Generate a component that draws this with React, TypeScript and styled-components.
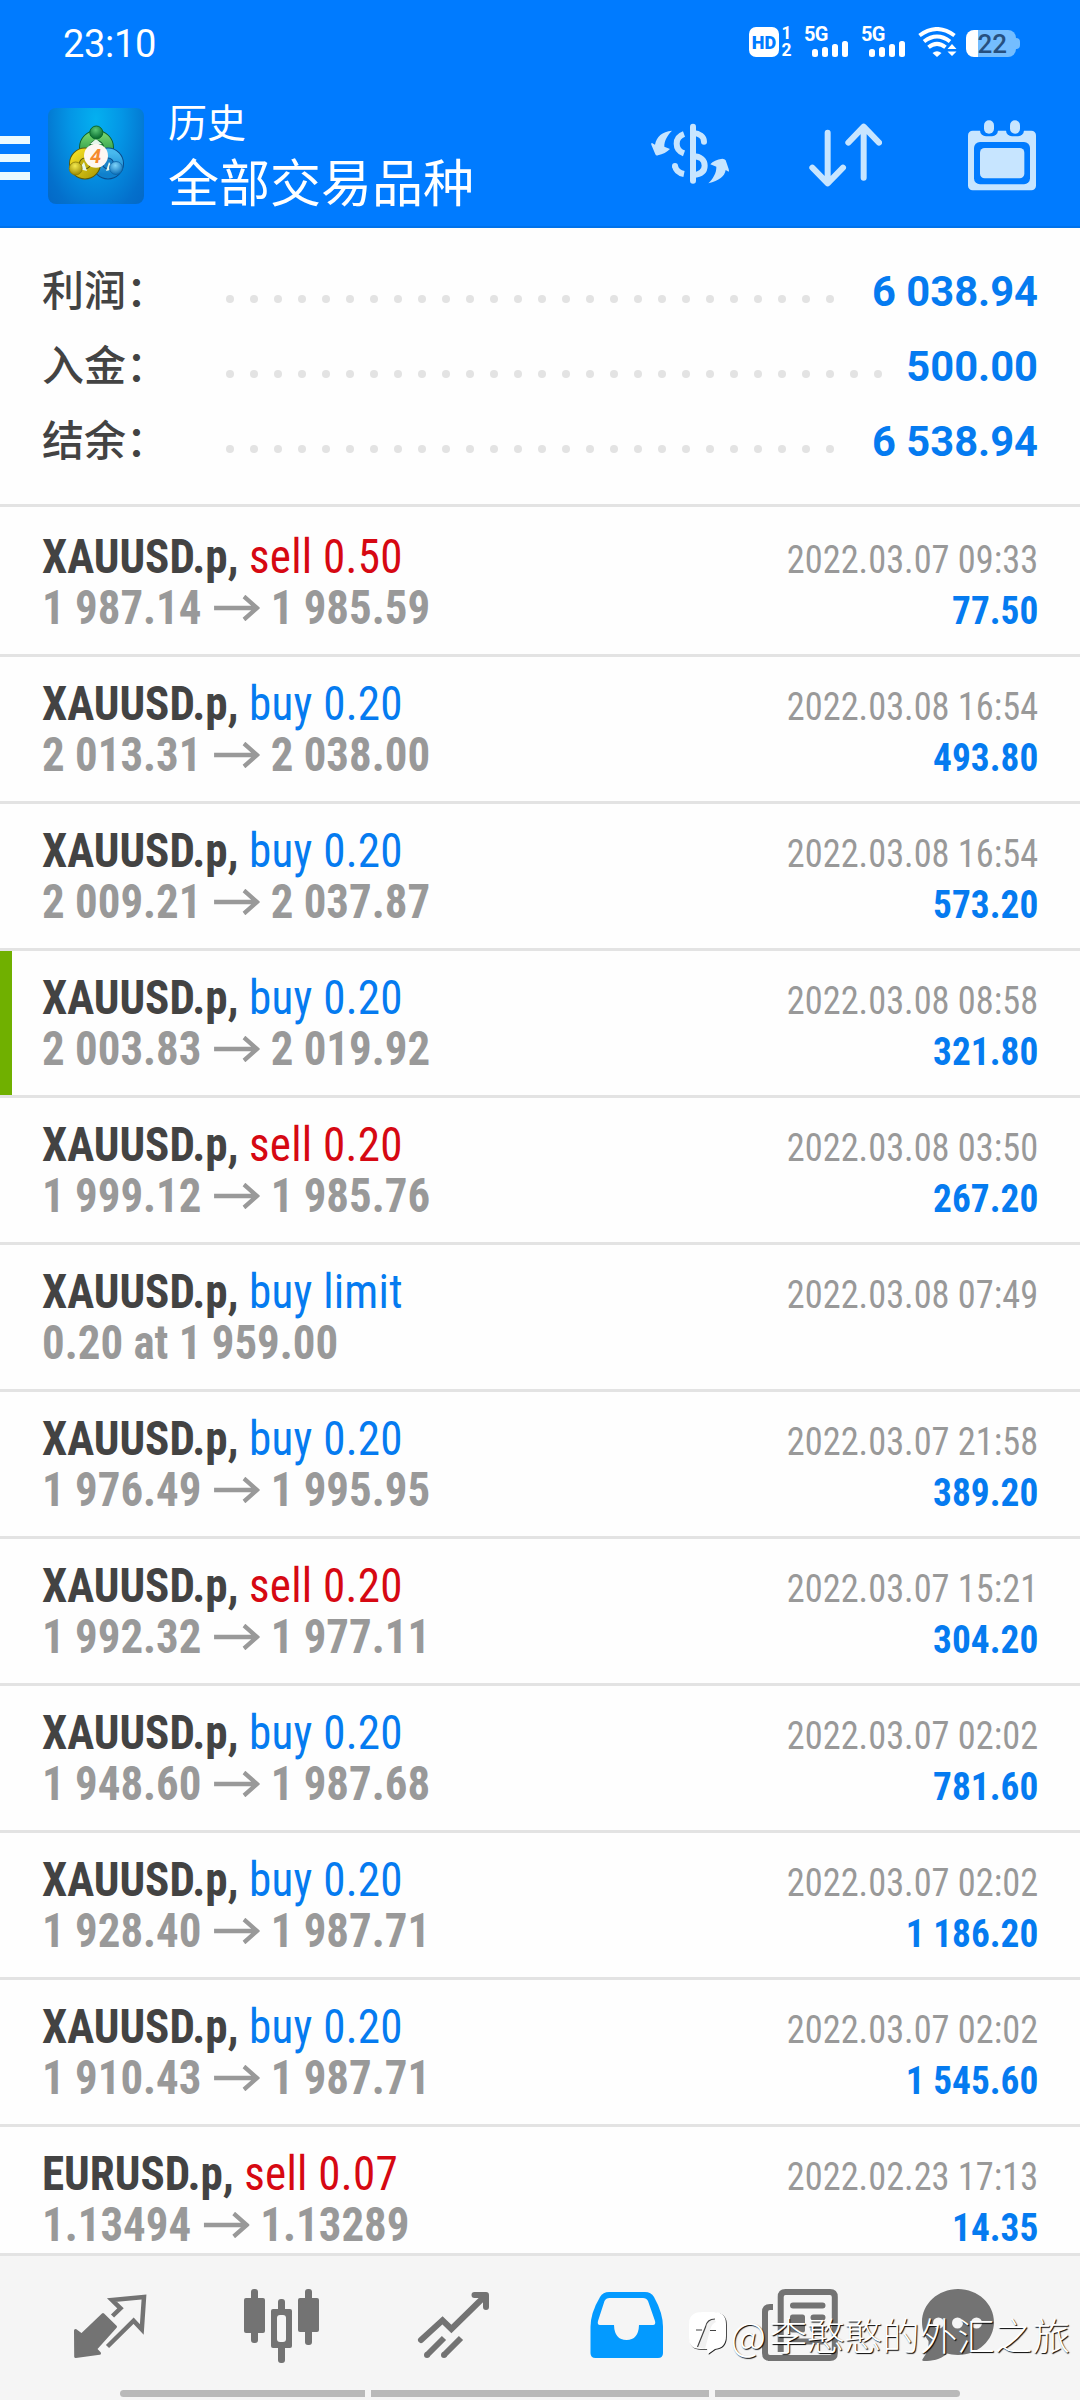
import React from "react";
import styled, { createGlobalStyle } from "styled-components";

const GlobalStyle = createGlobalStyle`
  * { box-sizing: border-box; }
  body {
    margin: 0;
    background: #fefefe;
    font-family: Roboto, "Noto Sans CJK SC", sans-serif;
  }
  svg { display: block; flex: none; }
`;

const Screen = styled.div`
  position: relative;
  width: 1080px;
  height: 2400px;
  display: flex;
  flex-direction: column;
  overflow: hidden;
  background: #fefefe;
`;

const Header = styled.header`
  flex: none;
  height: 228px;
  display: flex;
  flex-direction: column;
  background: #007bff;
  color: #fff;
  border-bottom: 2px solid #0072ea;
`;

const StatusBar = styled.div`
  height: 88px;
  padding: 0 60px 0 63px;
  display: flex;
  align-items: center;
  justify-content: space-between;
`;

const Clock = styled.span`
  font-size: 38px;
  line-height: 44px;
  letter-spacing: -0.3px;
`;

const StatusIcons = styled.div`
  display: flex;
  align-items: center;
  height: 30px;
  margin-top: -4px;
`;

const HdBadge = styled.span`
  width: 30px;
  height: 30px;
  border-radius: 7px;
  background: #fff;
  color: #007bff;
  font: 900 18px/31px Roboto, sans-serif;
  text-align: center;
`;

const SimNumbers = styled.span`
  width: 11px;
  margin: 0 12px 0 2px;
  display: flex;
  flex-direction: column;
  align-items: center;
  font: 700 17.5px/17px Roboto, sans-serif;
`;

const Signal = styled.span`
  width: 44px;
  height: 30px;
  margin-right: 13px;
  display: flex;
  flex-direction: column;
`;

const SignalLabel = styled.span`
  height: 14px;
  font: 700 20px/15px Roboto, sans-serif;
  letter-spacing: -0.6px;
`;

const SignalBars = styled.span`
  height: 16px;
  display: flex;
  align-items: flex-end;
  justify-content: flex-end;
  gap: 4px;
`;

const SignalBar = styled.i<{ $h: number }>`
  width: 6px;
  height: ${(p) => p.$h}px;
  border-radius: 2.5px;
  background: #fff;
`;

const Battery = styled.span`
  width: 50px;
  height: 27px;
  margin: 3px 0 0 8px;
  border-radius: 8px;
  background: linear-gradient(90deg, #fff 12px, #74bdff 12px);
  color: #27507f;
  font: 500 26px/28px Roboto, sans-serif;
  text-align: right;
  padding-right: 9px;
`;

const BatteryTip = styled.i`
  width: 4px;
  height: 11px;
  margin-top: 3px;
  border-radius: 0 4px 4px 0;
  background: #74bdff;
`;

const Toolbar = styled.div`
  flex: 1;
  padding: 0 36px 0 0;
  display: flex;
  align-items: flex-start;
`;

const MenuButton = styled.div`
  width: 30px;
  margin: 48px 18px 0 0;
  display: flex;
  flex-direction: column;
  gap: 10px;
`;

const MenuLine = styled.i`
  height: 8px;
  background: #eafaff;
`;

const AppLogo = styled.div`
  width: 96px;
  height: 96px;
  margin-top: 20px;
  border-radius: 8px;
  overflow: hidden;
  background: radial-gradient(ellipse at 50% 12%, #04b0f0 0%, #0496e6 38%, #0470cc 82%, #0468c6 100%);
`;

const Titles = styled.div`
  margin: 10px 0 0 24px;
  flex: 1;
  display: flex;
  flex-direction: column;
  font-family: "Noto Sans CJK SC", sans-serif;
`;

const Subtitle = styled.span`
  font-size: 39px;
  line-height: 44px;
`;

const Title = styled.span`
  margin-top: 8px;
  font-size: 51px;
  line-height: 60px;
`;

const Tools = styled.div`
  display: flex;
  align-items: flex-start;
  padding-top: 32px;
`;

const ToolSlot = styled.div<{ $top: number; $gap: number }>`
  margin: ${(p) => p.$top}px ${(p) => p.$gap}px 0 0;
`;

const SummaryPanel = styled.section`
  flex: none;
  height: 279px;
  padding: 24px 42px 0;
  border-bottom: 3px solid #e3e3e3;
`;

const SummaryRow = styled.div`
  height: 75px;
  display: flex;
  align-items: center;
`;

const SummaryLabel = styled.span`
  width: 176px;
  color: #434343;
  font: 500 42px/60px "Noto Sans CJK SC", sans-serif;
  margin-top: -3px;
`;

const Leader = styled.span`
  flex: 1;
  height: 8px;
  margin: 18px 12px 0 0;
  display: flex;
  flex-wrap: wrap;
  overflow: hidden;
`;

const LeaderDot = styled.i`
  width: 8px;
  height: 8px;
  margin: 0 8px;
  border-radius: 50%;
  background: #e3e3e3;
`;

const SummaryValue = styled.span`
  color: #057bf0;
  font-weight: 700;
  font-size: 41.7px;
  line-height: 50px;
  margin-top: 4px;
`;

const DealList = styled.main`
  flex: 1;
  min-height: 0;
  overflow: hidden;
  padding-top: 3px;
`;

const DealRow = styled.article<{ $marked?: boolean }>`
  height: 147px;
  padding: 21px 42px 0;
  border-bottom: 3px solid #e3e3e3;
  background-image: ${(p) => (p.$marked ? "linear-gradient(#70b000, #70b000)" : "none")};
  background-size: 12px 100%;
  background-repeat: no-repeat;
`;

const DealLine = styled.div`
  height: 51px;
  display: flex;
  align-items: baseline;
  justify-content: space-between;
  white-space: pre;
  font-family: "Roboto Condensed", Roboto, sans-serif;
  line-height: 51px;
`;

const Narrow = styled.span<{ $side: "left" | "right"; $scale: number }>`
  display: inline-flex;
  align-items: baseline;
  transform: scaleX(${(p) => p.$scale});
  transform-origin: ${(p) => p.$side} center;
`;

const Symbol = styled.b`
  color: #434343;
  font-size: 48px;
`;

const Action = styled.span<{ $sell: boolean }>`
  color: ${(p) => (p.$sell ? "#d60812" : "#057bf0")};
  font-size: 48px;
  font-weight: 450;
  letter-spacing: 0.3px;
`;

const Price = styled.b`
  color: #999;
  font-size: 48px;
`;

const PriceArrow = styled.svg`
  width: 49px;
  height: 26px;
  margin: 0 12px 0 13px;
  align-self: center;
`;

const DateText = styled.span`
  color: #999;
  font-size: 39.5px;
`;

const Profit = styled.b`
  color: #057bf0;
  font-size: 39.5px;
`;

const NavBar = styled.nav`
  flex: none;
  height: 147px;
  border-top: 3px solid #e3e3e3;
  background: #f5f5f5;
  display: flex;
  flex-direction: column;
`;

const NavItems = styled.div`
  height: 134px;
  padding: 22px 24px 0;
  display: grid;
  grid-template-columns: repeat(6, 172px);
  justify-items: center;
  color: #737373;
`;

const HomeIndicator = styled.div`
  width: 840px;
  height: 7px;
  margin-left: 120px;
  display: grid;
  grid-template-columns: 245px 1fr 245px;
  gap: 6px;
  border-radius: 4px;
  overflow: hidden;
`;

const HomeSegment = styled.i`
  background: #b9b9b9;
`;

const Watermark = styled.div`
  position: absolute;
  right: 10px;
  top: 2304px;
  height: 60px;
  display: flex;
  align-items: center;
  color: #fff;
  font: 300 37.6px/60px "Noto Sans CJK SC", sans-serif;
  text-shadow: 1px 1px 1px #000;
  white-space: nowrap;
`;

const AtSign = styled.span`
  width: 39px;
  font-size: 39px;
`;

const tint = "#c7e5ff";

const SwapCurrencyIcon = () => (
  <svg width="80" height="62" viewBox="30 340 240 186" fill={tint}>
    <rect x="150" y="342" width="18" height="180" rx="9" />
    <g fill="none" stroke={tint} strokeWidth="18">
      <path d="M160 370C178 371 192 381 192 396" strokeLinecap="round" />
      <path d="M160 440C182 440 194 452 194 468C194 484 182 494 160 496" />
      <path d="M132 373C118 378 110 388 110 402C110 416 118 426 132 431" />
      <path d="M105 469C107 481 117 490 132 493" />
    </g>
    <circle cx="105" cy="469" r="9" />
    <path d="M96 363C66 366 50 380 45 405L36 400Q32 400 34 405L46 434Q48 439 54 437Q76 432 90 418L73 411C72 392 84 375 96 363Z" />
    <path d="M205 521C238 513 254 500 257 481L266 486Q268 484 266 478L257 452Q254 447 247 447Q222 450 211 464L229 471C230 490 218 508 205 521Z" />
  </svg>
);

const SortIcon = () => (
  <svg width="73" height="64" viewBox="508 340 219 192" fill="none" stroke={tint} strokeWidth="18" strokeLinecap="round" strokeLinejoin="round">
    <path d="M564 369V519M518 474L564 521L610 474" />
    <path d="M672 504V353M626 399L672 351L718 399" />
  </svg>
);

const CalendarIcon = () => (
  <svg width="68" height="71" viewBox="984 329 204 213">
    <rect x="984" y="361" width="204" height="179" rx="14" fill={tint} />
    <rect x="1002" y="395" width="168" height="127" rx="18" fill="#007bff" />
    <rect x="1020" y="413" width="133" height="91" rx="14" fill={tint} />
    <rect x="1020" y="318" width="54" height="60" rx="18" fill="#007bff" />
    <rect x="1098" y="318" width="54" height="60" rx="18" fill="#007bff" />
    <rect x="1032" y="330" width="30" height="40" rx="15" fill={tint} />
    <rect x="1110" y="330" width="30" height="40" rx="15" fill={tint} />
  </svg>
);

const WifiIcon = () => (
  <svg width="40" height="30" viewBox="0 0 40 30" fill="none" stroke="#fff" strokeWidth="4">
    <path d="M1.500 8.500Q19 -4.500 36.500 8.500" />
    <path d="M6 14.500Q19 4.500 32 14.500" />
    <path d="M10.500 20.300Q19 13.500 27.500 20.300" />
    <path d="M14.500 26Q19 22.500 23.500 26L19 30Z" fill="#fff" stroke="none" />
    <path d="M34 17L38.500 22H29.500ZM34 29L29.500 24.500H38.500Z" fill="#fff" stroke="none" />
  </svg>
);

const LogoIcon = () => (
  <svg width="96" height="96" viewBox="48 108 96 96">
    <defs>
      <linearGradient id="green" x1="0" y1="0" x2="0" y2="1">
        <stop offset="0" stopColor="#6fd06c" />
        <stop offset="1" stopColor="#12863a" />
      </linearGradient>
      <linearGradient id="yellow" x1="0" y1="0" x2="1" y2="1">
        <stop offset="0" stopColor="#f2dc22" />
        <stop offset="1" stopColor="#b3a208" />
      </linearGradient>
      <linearGradient id="blue" x1="0" y1="0" x2="0" y2="1">
        <stop offset="0" stopColor="#48b9ee" />
        <stop offset="1" stopColor="#0f80cc" />
      </linearGradient>
      <radialGradient id="greenBall" cx="0.45" cy="0.3" r="0.7">
        <stop offset="0" stopColor="#5cc878" />
        <stop offset="1" stopColor="#04672a" />
      </radialGradient>
      <radialGradient id="yellowBall" cx="0.45" cy="0.3" r="0.7">
        <stop offset="0" stopColor="#f4ea50" />
        <stop offset="1" stopColor="#9c8a00" />
      </radialGradient>
      <radialGradient id="blueBall" cx="0.45" cy="0.3" r="0.7">
        <stop offset="0" stopColor="#7ed4fa" />
        <stop offset="1" stopColor="#0c6fb8" />
      </radialGradient>
    </defs>
    <circle cx="96.500" cy="147.500" r="12" fill="#2f9a48" stroke="#11602a" strokeWidth="11" />
    <circle cx="96.500" cy="147.500" r="12" fill="none" stroke="url(#green)" strokeWidth="9" />
    <circle cx="108" cy="163.500" r="10.500" fill="#1b84c8" stroke="#0a4c8c" strokeWidth="11" />
    <circle cx="108" cy="163.500" r="10.500" fill="none" stroke="url(#blue)" strokeWidth="9" />
    <circle cx="85" cy="163.500" r="10.500" fill="#c0b010" stroke="#5c5a08" strokeWidth="11" />
    <circle cx="85" cy="163.500" r="10.500" fill="none" stroke="url(#yellow)" strokeWidth="9" />
    <path d="M79 169L84 162L87 171ZM114 169L109 162L106 171ZM90 144H102L96 139Z" fill="#e4f6ea" />
    <circle cx="96.300" cy="132.500" r="6.500" fill="url(#greenBall)" stroke="#0b6a2c" />
    <circle cx="75.700" cy="168.500" r="6.500" fill="url(#yellowBall)" stroke="#8a7c08" strokeWidth="0.800" />
    <circle cx="116" cy="168" r="6.500" fill="url(#blueBall)" stroke="#0b63a6" strokeWidth="0.800" />
    <circle cx="96" cy="155.700" r="12" fill="#fdf7f2" />
    <text x="95.500" y="163" fill="#f58a2c" fontSize="20" fontWeight="700" fontStyle="italic" fontFamily="Roboto, sans-serif" textAnchor="middle">4</text>
  </svg>
);

const QuotesIcon = () => (
  <svg width="96" height="96" viewBox="62 2278 96 96">
    <path d="M75.500 2330.500L81.500 2335L103 2314.500L115.500 2326.700L95.500 2349L99.500 2353.300L75.700 2356.500Z" fill="currentColor" stroke="currentColor" strokeWidth="3" strokeLinejoin="round" />
    <path d="M112.500 2316L120.500 2308.300L112 2300L144 2297L141.800 2329.500L133.600 2320.700L107.500 2346.500" fill="none" stroke="currentColor" strokeWidth="4.500" />
  </svg>
);

const CandlesIcon = () => (
  <svg width="96" height="96" viewBox="234 2278 96 96" fill="currentColor">
    <rect x="244" y="2298" width="21" height="35" rx="2" />
    <rect x="251" y="2289" width="7" height="54" rx="3" />
    <rect x="298" y="2298" width="21" height="34" rx="2" />
    <rect x="305" y="2289" width="7" height="56" rx="3" />
    <rect x="278" y="2299" width="7" height="64" rx="3" />
    <rect x="271" y="2309" width="21" height="39" rx="2" />
    <rect x="277" y="2315" width="9" height="27" rx="3" fill="#f5f5f5" />
  </svg>
);

const TrendIcon = () => (
  <svg width="96" height="96" viewBox="406 2278 96 96" fill="none" stroke="currentColor" strokeWidth="6">
    <path d="M421 2340L442.500 2320.300L451.400 2329L484 2297" strokeLinecap="round" />
    <path d="M474.500 2295H486V2307" strokeLinecap="round" strokeLinejoin="round" />
    <path d="M427 2355L444 2338M444 2355L461 2338" />
    <g fill="currentColor" stroke="none">
      <circle cx="427" cy="2355" r="3" />
      <circle cx="444" cy="2355" r="3" />
    </g>
  </svg>
);

const TradeIcon = () => (
  <svg width="96" height="96" viewBox="578 2278 96 96">
    <path d="M609 2292H645Q651 2292 654 2297Q663 2313 663 2327V2353Q663 2358 658 2358H595.500Q590.500 2358 590.500 2353V2327Q590.500 2313 600 2297Q603 2292 609 2292Z" fill="#039aff" />
    <path d="M609.500 2298H643Q646.500 2298 648 2301L655 2321Q656 2325 653 2325H639Q638.500 2340 626.500 2340Q614.500 2340 614 2325H600Q597 2325 598 2321L604.500 2301Q606 2298 609.500 2298Z" fill="#f5f5f5" />
  </svg>
);

const NewsIcon = () => (
  <svg width="96" height="96" viewBox="750 2278 96 96">
    <path d="M773 2307H770Q765 2307 765 2312V2353Q765 2358 770 2358H780" fill="none" stroke="currentColor" strokeWidth="6" />
    <path d="M768 2358H830Q834.800 2358 834.800 2353V2297Q834.800 2292 830 2292H785.500Q780.700 2292 780.700 2297V2352" fill="none" stroke="currentColor" strokeWidth="6" />
    <path d="M793 2305.500H822.500M813.500 2317.500H822.500M813.500 2329.500H822.500M793 2341.500H822.500" stroke="currentColor" strokeWidth="6" strokeLinecap="round" />
    <rect x="790" y="2314.500" width="15" height="18" rx="2.500" fill="currentColor" />
  </svg>
);

const ChatIcon = () => (
  <svg width="96" height="96" viewBox="922 2278 96 96">
    <path d="M958 2289C978 2289 994 2304 994 2322C994 2340 978 2355 958 2355C953 2355 950 2354 947 2353.500C940 2360 932 2361 924 2361Q921 2361 923 2358.500C927 2353 929 2348 928.500 2341C924 2335 922 2329 922 2322C922 2304 938 2289 958 2289Z" fill="currentColor" />
    <g fill="#f5f5f5">
      <circle cx="938.500" cy="2323" r="5.500" />
      <circle cx="957.500" cy="2323" r="5.500" />
      <circle cx="976.500" cy="2323" r="5.500" />
    </g>
  </svg>
);

const WatermarkIcon = () => (
  <svg width="42" height="46" viewBox="0 0 42 46">
    <path d="M14 1H26Q38 1 38 13V25Q38 37 27 38L20 43L19 38H12Q1 38 1 27V13Q1 1 14 1Z" fill="#222" transform="translate(0.800 0.800)" />
    <path d="M14 1H26Q38 1 38 13V25Q38 37 27 38L20 43L19 38H12Q1 38 1 27V13Q1 1 14 1Z" fill="#fff" />
    <path d="M26 8Q20 8 18 16L10 36L17 38L22 19Q24 12 28 11Z" fill="#f1f1f1" />
    <path d="M27 8Q19 8 17.500 16L9.500 36M8 19H14M22 19.500H28" fill="none" stroke="#444" strokeWidth="1.200" />
  </svg>
);

const summary = [
  ["利润：", "6 038.94"],
  ["入金：", "500.00"],
  ["结余：", "6 538.94"],
];

type Deal = {
  symbol?: string;
  action: string;
  from: string;
  to?: string;
  date: string;
  profit?: string;
  marked?: boolean;
};

const deals: Deal[] = [
  { action: "sell 0.50", from: "1 987.14", to: "1 985.59", date: "2022.03.07 09:33", profit: "77.50" },
  { action: "buy 0.20", from: "2 013.31", to: "2 038.00", date: "2022.03.08 16:54", profit: "493.80" },
  { action: "buy 0.20", from: "2 009.21", to: "2 037.87", date: "2022.03.08 16:54", profit: "573.20" },
  { action: "buy 0.20", from: "2 003.83", to: "2 019.92", date: "2022.03.08 08:58", profit: "321.80", marked: true },
  { action: "sell 0.20", from: "1 999.12", to: "1 985.76", date: "2022.03.08 03:50", profit: "267.20" },
  { action: "buy limit", from: "0.20 at 1 959.00", date: "2022.03.08 07:49" },
  { action: "buy 0.20", from: "1 976.49", to: "1 995.95", date: "2022.03.07 21:58", profit: "389.20" },
  { action: "sell 0.20", from: "1 992.32", to: "1 977.11", date: "2022.03.07 15:21", profit: "304.20" },
  { action: "buy 0.20", from: "1 948.60", to: "1 987.68", date: "2022.03.07 02:02", profit: "781.60" },
  { action: "buy 0.20", from: "1 928.40", to: "1 987.71", date: "2022.03.07 02:02", profit: "1 186.20" },
  { action: "buy 0.20", from: "1 910.43", to: "1 987.71", date: "2022.03.07 02:02", profit: "1 545.60" },
  { symbol: "EURUSD.p", action: "sell 0.07", from: "1.13494", to: "1.13289", date: "2022.02.23 17:13", profit: "14.35" },
];

const SignalIndicator = () => (
  <Signal>
    <SignalLabel>5G</SignalLabel>
    <SignalBars>
      {[8, 10, 13, 16].map((h) => (
        <SignalBar key={h} $h={h} />
      ))}
    </SignalBars>
  </Signal>
);

export default function App() {
  return (
    <Screen>
      <GlobalStyle />
      <Header>
        <StatusBar>
          <Clock>23:10</Clock>
          <StatusIcons>
            <HdBadge>HD</HdBadge>
            <SimNumbers>
              <span>1</span>
              <span>2</span>
            </SimNumbers>
            <SignalIndicator />
            <SignalIndicator />
            <WifiIcon />
            <Battery>22</Battery>
            <BatteryTip />
          </StatusIcons>
        </StatusBar>
        <Toolbar>
          <MenuButton>
            <MenuLine />
            <MenuLine />
            <MenuLine />
          </MenuButton>
          <AppLogo>
            <LogoIcon />
          </AppLogo>
          <Titles>
            <Subtitle>历史</Subtitle>
            <Title>全部交易品种</Title>
          </Titles>
          <Tools>
            <ToolSlot $top={3} $gap={79}>
              <SwapCurrencyIcon />
            </ToolSlot>
            <ToolSlot $top={3} $gap={86}>
              <SortIcon />
            </ToolSlot>
            <ToolSlot $top={0} $gap={8}>
              <CalendarIcon />
            </ToolSlot>
          </Tools>
        </Toolbar>
      </Header>
      <SummaryPanel>
        {summary.map(([label, value]) => (
          <SummaryRow key={label}>
            <SummaryLabel>{label}</SummaryLabel>
            <Leader>
              {Array.from({ length: 32 }, (_, i) => (
                <LeaderDot key={i} />
              ))}
            </Leader>
            <SummaryValue>{value}</SummaryValue>
          </SummaryRow>
        ))}
      </SummaryPanel>
      <DealList>
        {deals.map((d, i) => (
          <DealRow key={i} $marked={d.marked}>
            <DealLine>
              <Narrow $side="left" $scale={0.938}>
                <Symbol>{d.symbol ?? "XAUUSD.p"}, </Symbol>
                <Action $sell={d.action.startsWith("sell")}>{d.action}</Action>
              </Narrow>
              <Narrow $side="right" $scale={0.92}>
                <DateText>{d.date}</DateText>
              </Narrow>
            </DealLine>
            <DealLine>
              <Narrow $side="left" $scale={0.935}>
                <Price>{d.from}</Price>
                {d.to && (
                  <>
                    <PriceArrow viewBox="0 0 49 26" fill="none" stroke="#999" strokeWidth="4.5">
                      <path d="M0 13H46M32 1.500L46 13L32 24.500" />
                    </PriceArrow>
                    <Price>{d.to}</Price>
                  </>
                )}
              </Narrow>
              <Narrow $side="right" $scale={0.945}>
                <Profit>{d.profit}</Profit>
              </Narrow>
            </DealLine>
          </DealRow>
        ))}
      </DealList>
      <NavBar>
        <NavItems>
          <QuotesIcon />
          <CandlesIcon />
          <TrendIcon />
          <TradeIcon />
          <NewsIcon />
          <ChatIcon />
        </NavItems>
        <HomeIndicator>
          <HomeSegment />
          <HomeSegment />
          <HomeSegment />
        </HomeIndicator>
      </NavBar>
      <Watermark>
        <WatermarkIcon />
        <AtSign>@</AtSign>
        <span>李憨憨的外汇之旅</span>
      </Watermark>
    </Screen>
  );
}
